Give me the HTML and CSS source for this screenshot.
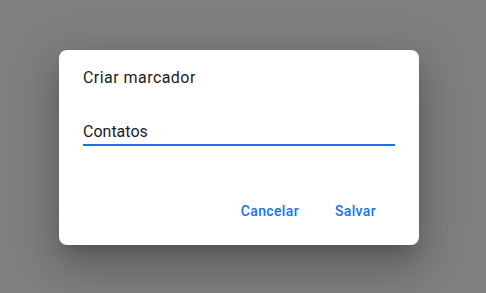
FILE: index.html
```html
<!DOCTYPE html>
<html lang="pt">
<head>
<meta charset="utf-8">
<title>Criar marcador</title>
<link rel="stylesheet" href="styles.css">
</head>
<body>
<div class="scrim">
  <div class="dialog" role="dialog" aria-labelledby="dlg-title">
    <div class="dialog-title" id="dlg-title">Criar marcador</div>
    <div class="field">
      <div class="field-input">Contatos</div>
    </div>
    <div class="actions">
      <button class="btn">Cancelar</button>
      <button class="btn">Salvar</button>
    </div>
  </div>
</div>
</body>
</html>
```
FILE: styles.css
```css
html, body {
  margin: 0;
  padding: 0;
  height: 100%;
}
body {
  background: #7f7f7f;
  font-family: Roboto, "Liberation Sans", Arial, sans-serif;
  overflow: hidden;
}
.scrim {
  display: flex;
  align-items: flex-start;
  justify-content: flex-start;
  padding: 50px 0 0 59px;
  box-sizing: border-box;
  height: 100%;
}
.dialog {
  width: 360px;
  height: 195px;
  box-sizing: border-box;
  background: #fff;
  border-radius: 8px;
  box-shadow: 0 24px 38px 3px rgba(0,0,0,.14), 0 9px 46px 8px rgba(0,0,0,.12), 0 11px 15px -7px rgba(0,0,0,.2);
  padding: 16px 24px 16px 24px;
  display: flex;
  flex-direction: column;
}
.dialog-title {
  font-size: 16px;
  line-height: 24px;
  color: #202124;
  letter-spacing: 0.45px;
}
.field {
  margin-top: 30px;
  border-bottom: 2px solid #1a73e8;
}
.field-input {
  font-size: 16px;
  line-height: 24px;
  color: #202124;
}
.actions {
  margin-top: auto;
  display: flex;
  justify-content: flex-end;
  margin-right: 1px;
}
.btn {
  font-family: Roboto, "Liberation Sans", Arial, sans-serif;
  font-size: 14px;
  font-weight: 500;
  letter-spacing: 0.35px;
  color: #1a73e8;
  background: transparent;
  border: 0;
  height: 36px;
  line-height: 36px;
  padding: 0 18px;
  border-radius: 4px;
  cursor: pointer;
}
```
